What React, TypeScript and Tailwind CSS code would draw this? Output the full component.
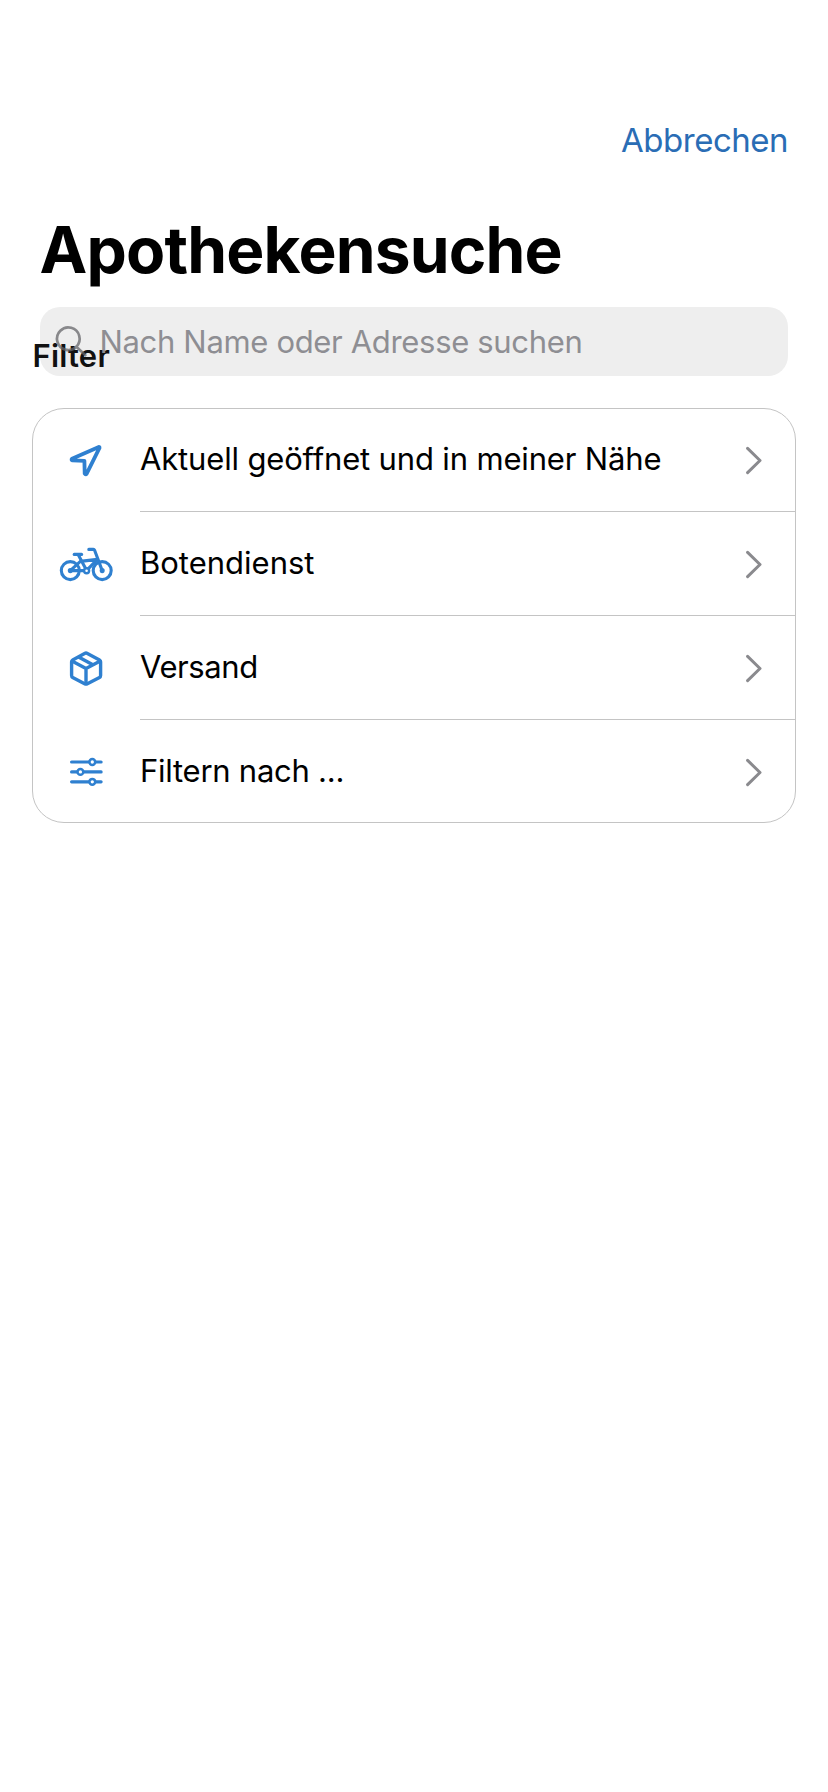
import React from "react";

type RowProps = {
  label: string;
  icon: React.ReactNode;
  rowClass: string;
  padClass: string;
  textClass: string;
  last?: boolean;
};

function LocationIcon() {
  return (
    <svg width="36" height="36" viewBox="0 0 36 36" fill="none" stroke="#2F80D0" strokeWidth="3.8" strokeLinejoin="round">
      <path d="M30.8 4 L4 15.8 Q3 17 4.4 17.4 L16.4 17.9 L16.7 30.6 Q17.6 32.2 18.7 30.6 L31.5 4.9 Q31.5 4 30.8 4 Z" />
    </svg>
  );
}

function BikeIcon() {
  return (
    <svg width="54" height="38" viewBox="0 0 54 38" fill="none" stroke="#2F80D0" strokeWidth="3.1" strokeLinecap="round" strokeLinejoin="round">
      <circle cx="11.3" cy="24.6" r="9" />
      <circle cx="43.2" cy="24.6" r="9" />
      <path d="M11.3 24.6 L21.4 15.4 L38.4 13.4 L29.4 22.6 M11.3 24.6 H25" />
      <path d="M19.4 9 L26.6 22.6" />
      <path d="M15.2 8.4 H22.6" />
      <path d="M43.2 24.6 L35.6 4.2 Q35.2 3.4 34.4 3.4 H29.8" />
      <circle cx="27.6" cy="24.8" r="2.5" fill="#fff" strokeWidth="2.4" />
      <circle cx="11.3" cy="24.6" r="1" />
      <circle cx="43.2" cy="24.6" r="1" />
    </svg>
  );
}

function BoxIcon() {
  return (
    <svg width="36" height="38" viewBox="0 0 36 38" fill="none" stroke="#2F80D0" strokeWidth="3.4" strokeLinejoin="round" strokeLinecap="round">
      <path d="M16.6 3.4 L4.7 9.9 Q3.6 10.5 3.6 11.8 V25.6 Q3.6 26.9 4.7 27.5 L16.6 33.8 Q18 34.5 19.4 33.8 L31.5 27.5 Q32.6 26.9 32.6 25.6 V11.8 Q32.6 10.5 31.5 9.9 L19.4 3.4 Q18 2.7 16.6 3.4 Z" />
      <path d="M4.4 11.2 L18 18.5 L31.8 11.2 M18 18.5 V33.4 M11 7.2 L24.4 14.6" />
    </svg>
  );
}

function SlidersIcon() {
  return (
    <svg width="36" height="36" viewBox="0 0 36 36" fill="none" stroke="#2F80D0" strokeWidth="3.2" strokeLinecap="round">
      <path d="M3.6 8 H33.1 M3.6 17.9 H33.1 M3.6 27.8 H33.1" />
      <circle cx="24.3" cy="8" r="2.9" strokeWidth="2.5" fill="#fff" />
      <circle cx="12.4" cy="17.9" r="2.9" strokeWidth="2.5" fill="#fff" />
      <circle cx="24.3" cy="27.8" r="2.9" strokeWidth="2.5" fill="#fff" />
    </svg>
  );
}

function Row({ label, icon, rowClass, padClass, textClass, last }: RowProps) {
  return (
    <div className={`flex ${rowClass}`}>
      <div className="flex w-[107px] shrink-0 items-start justify-center pr-px pt-[34px]">{icon}</div>
      <div className={`flex flex-1 items-start justify-between pr-[33px] ${padClass} ${last ? "" : "border-b border-[#c4c4c4]"}`}>
        <span className={`whitespace-nowrap text-[31px] leading-[40px] text-black ${textClass}`}>{label}</span>
        <svg className="mt-[7px]" width="16" height="29" viewBox="0 0 16 29" fill="none" stroke="#8A8A8E" strokeWidth="3" strokeLinecap="round" strokeLinejoin="round">
          <path d="M1.6 2.4 L14 14.5 L1.6 26.6" />
        </svg>
      </div>
    </div>
  );
}

export default function App() {
  return (
    <div className="flex h-[1792px] w-[828px] flex-col bg-white font-['Inter',sans-serif]">
      <header className="flex h-[180px] justify-end pr-[40px] pt-[120px]">
        <span className="h-[40px] text-[33px] leading-[40px] tracking-[-0.5px] text-[#2A6DB5]">Abbrechen</span>
      </header>
      <h1 className="h-[127px] pl-[39.5px] pt-[30px] text-[64px] font-bold leading-[80px] tracking-[-0.82px] text-black">
        Apothekensuche
      </h1>
      <div className="relative mx-[40px] flex h-[69px] items-center rounded-[20px] bg-[#EEEEEE] pl-[14px]">
        <span className="absolute -left-[7.5px] top-[29px] text-[31px] font-semibold leading-[40px] tracking-[0.2px] text-[#111]">
          Filter
        </span>
        <svg className="relative mt-[17px] self-start" width="36" height="36" viewBox="0 0 36 36" fill="none" stroke="rgb(102 102 106)" strokeOpacity="0.75" strokeWidth="2.7" strokeLinecap="round">
          <path d="M22.3 22.7 A11.3 11.3 0 1 1 22.31 22.69 L31.4 31.2" />
        </svg>
        <span className="relative pl-[9.5px] text-[31px] leading-[40px] tracking-[-0.33px] text-[#8E8E93]">
          Nach Name oder Adresse suchen
        </span>
      </div>
      <main className="mx-[32px] mt-[32px] flex flex-col rounded-[32px] border border-[#c4c4c4]">
        <Row label="Aktuell geöffnet und in meiner Nähe" icon={<LocationIcon />} rowClass="h-[103px]" padClass="pt-[30px]" textClass="tracking-[-0.16px]" />
        <Row label="Botendienst" icon={<BikeIcon />} rowClass="h-[104px]" padClass="pt-[31px]" textClass="" />
        <Row label="Versand" icon={<BoxIcon />} rowClass="h-[104px]" padClass="pt-[31px]" textClass="tracking-[-0.4px]" />
        <Row label="Filtern nach ..." icon={<SlidersIcon />} rowClass="h-[102px]" padClass="pt-[31px]" textClass="tracking-[-0.25px]" last />
      </main>
    </div>
  );
}
